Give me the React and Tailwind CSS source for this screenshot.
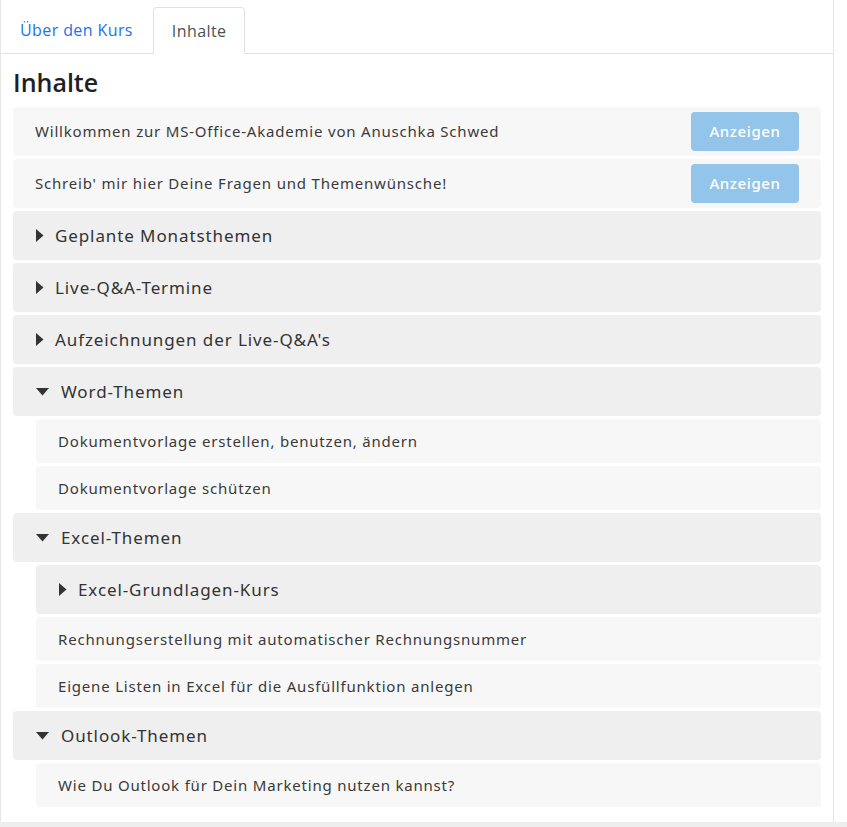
import React from 'react'

const rowFont = { fontFamily: '"Noto Sans", Lato, sans-serif' }

function Caret({ open }) {
  return open ? (
    <svg width="13" height="8" viewBox="0 0 13 8" className="shrink-0">
      <path d="M0 0 L13 0 L6.5 7.5 Z" fill="#333" />
    </svg>
  ) : (
    <svg width="8" height="13" viewBox="0 0 8 13" className="shrink-0">
      <path d="M0 0 L7.5 6.5 L0 13 Z" fill="#333" />
    </svg>
  )
}

function Activity({ title, button }) {
  return (
    <div className="flex items-center justify-between h-[49px] rounded bg-[#f7f7f7] pl-[22px] pr-[22px]">
      <span className="text-[15px] tracking-[0.8px] text-[#3a3a3a]">{title}</span>
      {button && (
        <button className="h-[39px] w-[108px] rounded bg-[#93c4e9] text-[15px] tracking-[0.6px] font-medium text-white">Anzeigen</button>
      )}
    </div>
  )
}

function SubItem({ title }) {
  return (
    <div className="flex items-center h-[44px] rounded bg-[#f7f7f7] pl-[22px]">
      <span className="text-[15px] tracking-[0.8px] text-[#3a3a3a]">{title}</span>
    </div>
  )
}

function Section({ title, open, children }) {
  return (
    <div className="flex flex-col gap-[3px]">
      <div className="flex items-center h-[49px] rounded bg-[#efefef] pl-[23px]">
        <Caret open={open} />
        <span className={`text-[17px] tracking-[0.9px] text-[#333] ${open ? 'ml-[12px]' : 'ml-[11px]'}`}>{title}</span>
      </div>
      {open && children && <div className="flex flex-col gap-[3px] pl-[23px]">{children}</div>}
    </div>
  )
}

export default function App() {
  return (
    <div className="min-h-screen bg-white">
      <div className="w-[834px] border-l border-r border-[#e6e6e6] bg-white pb-[15px]" style={{ fontFamily: '"Open Sans", sans-serif' }}>
        <div className="flex items-end h-[54px] border-b border-[#dee2e6] pl-[3px]">
          <div className="px-[16px] h-[46px] flex items-center text-[16px] tracking-[0.4px] text-[#1a73e8]">Über den Kurs</div>
          <div className="ml-[4px] h-[47px] -mb-px px-[18px] flex items-center text-[16px] tracking-[0.4px] text-[#495057] bg-white border border-[#dee2e6] border-b-white rounded-t">Inhalte</div>
        </div>
        <h3 className="pl-[12px] mt-[13px] mb-[10px] text-[25px] leading-[30px] text-[#1d2125] font-semibold">Inhalte</h3>
        <div className="flex flex-col gap-[3px] px-[12px]" style={rowFont}>
          <Activity title="Willkommen zur MS-Office-Akademie von Anuschka Schwed" button />
          <Activity title="Schreib' mir hier Deine Fragen und Themenwünsche!" button />
          <Section title="Geplante Monatsthemen" />
          <Section title="Live-Q&A-Termine" />
          <Section title="Aufzeichnungen der Live-Q&A's" />
          <Section title="Word-Themen" open>
            <SubItem title="Dokumentvorlage erstellen, benutzen, ändern" />
            <SubItem title="Dokumentvorlage schützen" />
          </Section>
          <Section title="Excel-Themen" open>
            <Section title="Excel-Grundlagen-Kurs" />
            <SubItem title="Rechnungserstellung mit automatischer Rechnungsnummer" />
            <SubItem title="Eigene Listen in Excel für die Ausfüllfunktion anlegen" />
          </Section>
          <Section title="Outlook-Themen" open>
            <SubItem title="Wie Du Outlook für Dein Marketing nutzen kannst?" />
          </Section>
        </div>
      </div>
      <div className="h-[6px] bg-[#eeeeee]" />
    </div>
  )
}
